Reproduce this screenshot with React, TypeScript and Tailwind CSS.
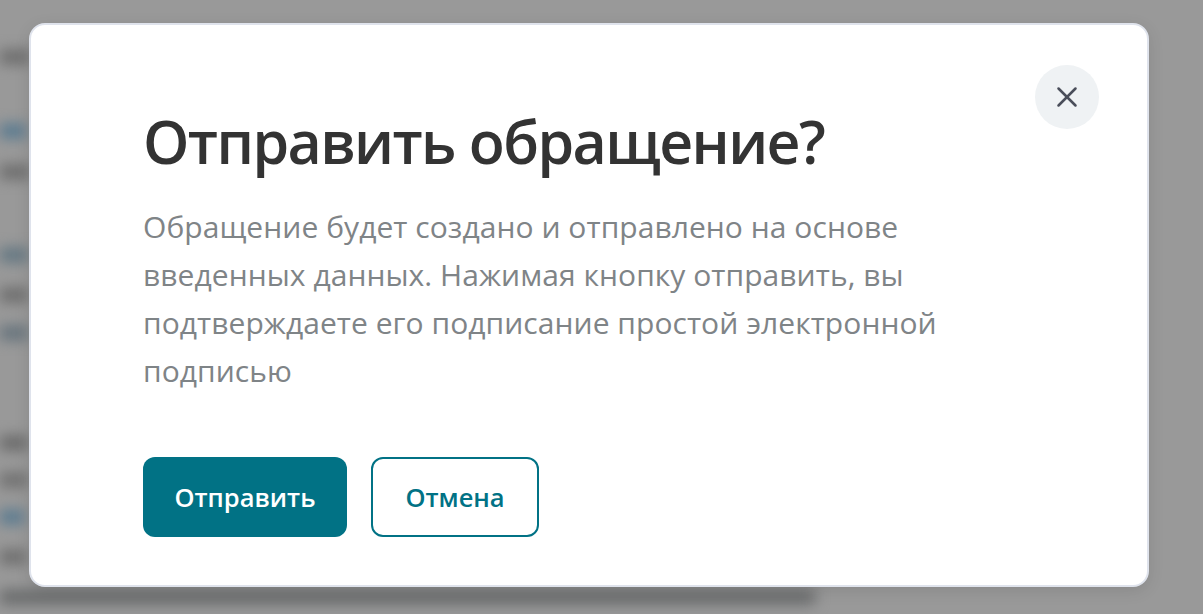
import React from "react";
import { X } from "lucide-react";

const blurred = [
  { top: 50, w: 30, tone: "bg-[#6a6a6a]" },
  { top: 124, w: 26, tone: "bg-[#55788f]" },
  { top: 165, w: 30, tone: "bg-[#6a6a6a]" },
  { top: 248, w: 28, tone: "bg-[#5f7480]" },
  { top: 288, w: 28, tone: "bg-[#6a6a6a]" },
  { top: 326, w: 28, tone: "bg-[#62707a]" },
  { top: 436, w: 28, tone: "bg-[#666666]" },
  { top: 473, w: 28, tone: "bg-[#6d6d6d]" },
  { top: 510, w: 24, tone: "bg-[#55788f]" },
  { top: 550, w: 26, tone: "bg-[#6a6a6a]" },
];

export default function App() {
  return (
    <div className="relative h-[614px] w-[1203px] overflow-hidden bg-[#999999] font-['Open_Sans','Noto_Sans',sans-serif]">
      {/* page behind the overlay */}
      <div className="absolute inset-0 blur-[7px]">
        {blurred.map((b) => (
          <div key={b.top} className={`absolute left-0 h-[14px] ${b.tone}`} style={{ top: b.top, width: b.w }} />
        ))}
        <div className="absolute left-0 top-[590px] h-[14px] w-[815px] bg-[#666869]" />
      </div>

      <div className="relative ml-[29px] mt-[23px] flex h-[564px] w-[1120px] flex-col rounded-[16px] border-2 border-[#dfe3ec] bg-white pl-[112px] pt-[76px] shadow-[0_4px_16px_rgba(0,0,0,0.1)]">
        <button className="absolute right-[48px] top-[40px] flex h-[64px] w-[64px] items-center justify-center rounded-full bg-[#eff2f4] text-[#4a4e5a]">
          <X size={34} strokeWidth={1.8} />
        </button>
        <h1 className="text-[59px] leading-[80px] font-semibold tracking-[-1.6px] text-[#333333]">Отправить обращение?</h1>
        <p className="mt-[22px] w-[830px] text-[30px] leading-[48px] tracking-[0.05px] text-[#7f8487]">
          Обращение будет создано и отправлено на основе введенных данных. Нажимая кнопку отправить, вы подтверждаете его подписание простой электронной подписью
        </p>
        <div className="mt-[62px] flex gap-[24px]">
          <button className="h-[80px] w-[204px] rounded-[12px] bg-[#017285] text-[25.5px] font-semibold text-white">Отправить</button>
          <button className="h-[80px] w-[168px] rounded-[12px] border-2 border-[#017285] bg-white text-[25.5px] font-semibold text-[#017285]">Отмена</button>
        </div>
      </div>
    </div>
  );
}
